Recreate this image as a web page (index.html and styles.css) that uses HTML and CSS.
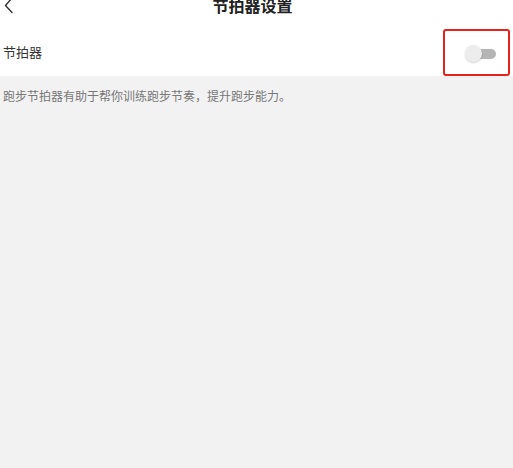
FILE: index.html
```html
<!DOCTYPE html>
<html lang="zh-CN">
<head>
<meta charset="utf-8">
<title>节拍器设置</title>
<link rel="stylesheet" href="styles.css">
</head>
<body>
<div class="top">
  <header class="header">
    <svg class="back" width="10" height="16" viewBox="0 0 10 16"><path d="M8 -2 L1.5 5.5 L8 12.5" fill="none" stroke="#333" stroke-width="1.4" stroke-linecap="round" stroke-linejoin="round"/></svg>
    <h1 class="title">节拍器设置</h1>
  </header>
  <div class="row">
    <span class="label">节拍器</span>
    <div class="highlight">
      <div class="switch">
        <span class="track"></span>
        <span class="knob"></span>
      </div>
    </div>
  </div>
</div>
<p class="desc">跑步节拍器有助于帮你训练跑步节奏，提升跑步能力。</p>
</body>
</html>
```
FILE: styles.css
```css
html, body {
  margin: 0;
  padding: 0;
  height: 100%;
  background: #f2f2f2;
  font-family: "Noto Sans CJK SC", "Noto Sans", sans-serif;
}
.top {
  background: #ffffff;
}
.header {
  height: 12px;
  position: relative;
  display: flex;
  align-items: flex-end;
  justify-content: center;
}
.back {
  position: absolute;
  left: 4px;
  top: 0;
}
.title {
  margin: 0 8px 0 0;
  font-size: 16px;
  line-height: 16px;
  font-weight: 700;
  color: #222;
  position: relative;
  top: 1px;
}
.row {
  margin-top: 17px;
  height: 47px;
  display: flex;
  align-items: center;
  justify-content: space-between;
  padding-left: 3px;
  padding-right: 3px;
}
.label {
  font-size: 13px;
  color: #333;
  line-height: 16px;
  position: relative;
  top: -1px;
}
.highlight {
  box-sizing: border-box;
  width: 67px;
  height: 47px;
  border: 2px solid #e6221c;
  border-radius: 3px;
  display: flex;
  align-items: center;
  padding-left: 20px;
}
.switch {
  position: relative;
  width: 31px;
  height: 17px;
  display: flex;
  align-items: center;
  margin-top: 2px;
}
.track {
  display: block;
  margin-left: 5px;
  width: 26px;
  height: 10px;
  border-radius: 5px;
  background: #b5b5b5;
}
.knob {
  position: absolute;
  left: 0;
  top: 0;
  width: 17px;
  height: 17px;
  border-radius: 50%;
  background: #ededed;
  box-shadow: 0 1px 2px rgba(0,0,0,0.18);
}
.desc {
  margin: 0;
  padding: 12px 3px 0;
  font-size: 12px;
  line-height: 16px;
  color: #777;
}
```
